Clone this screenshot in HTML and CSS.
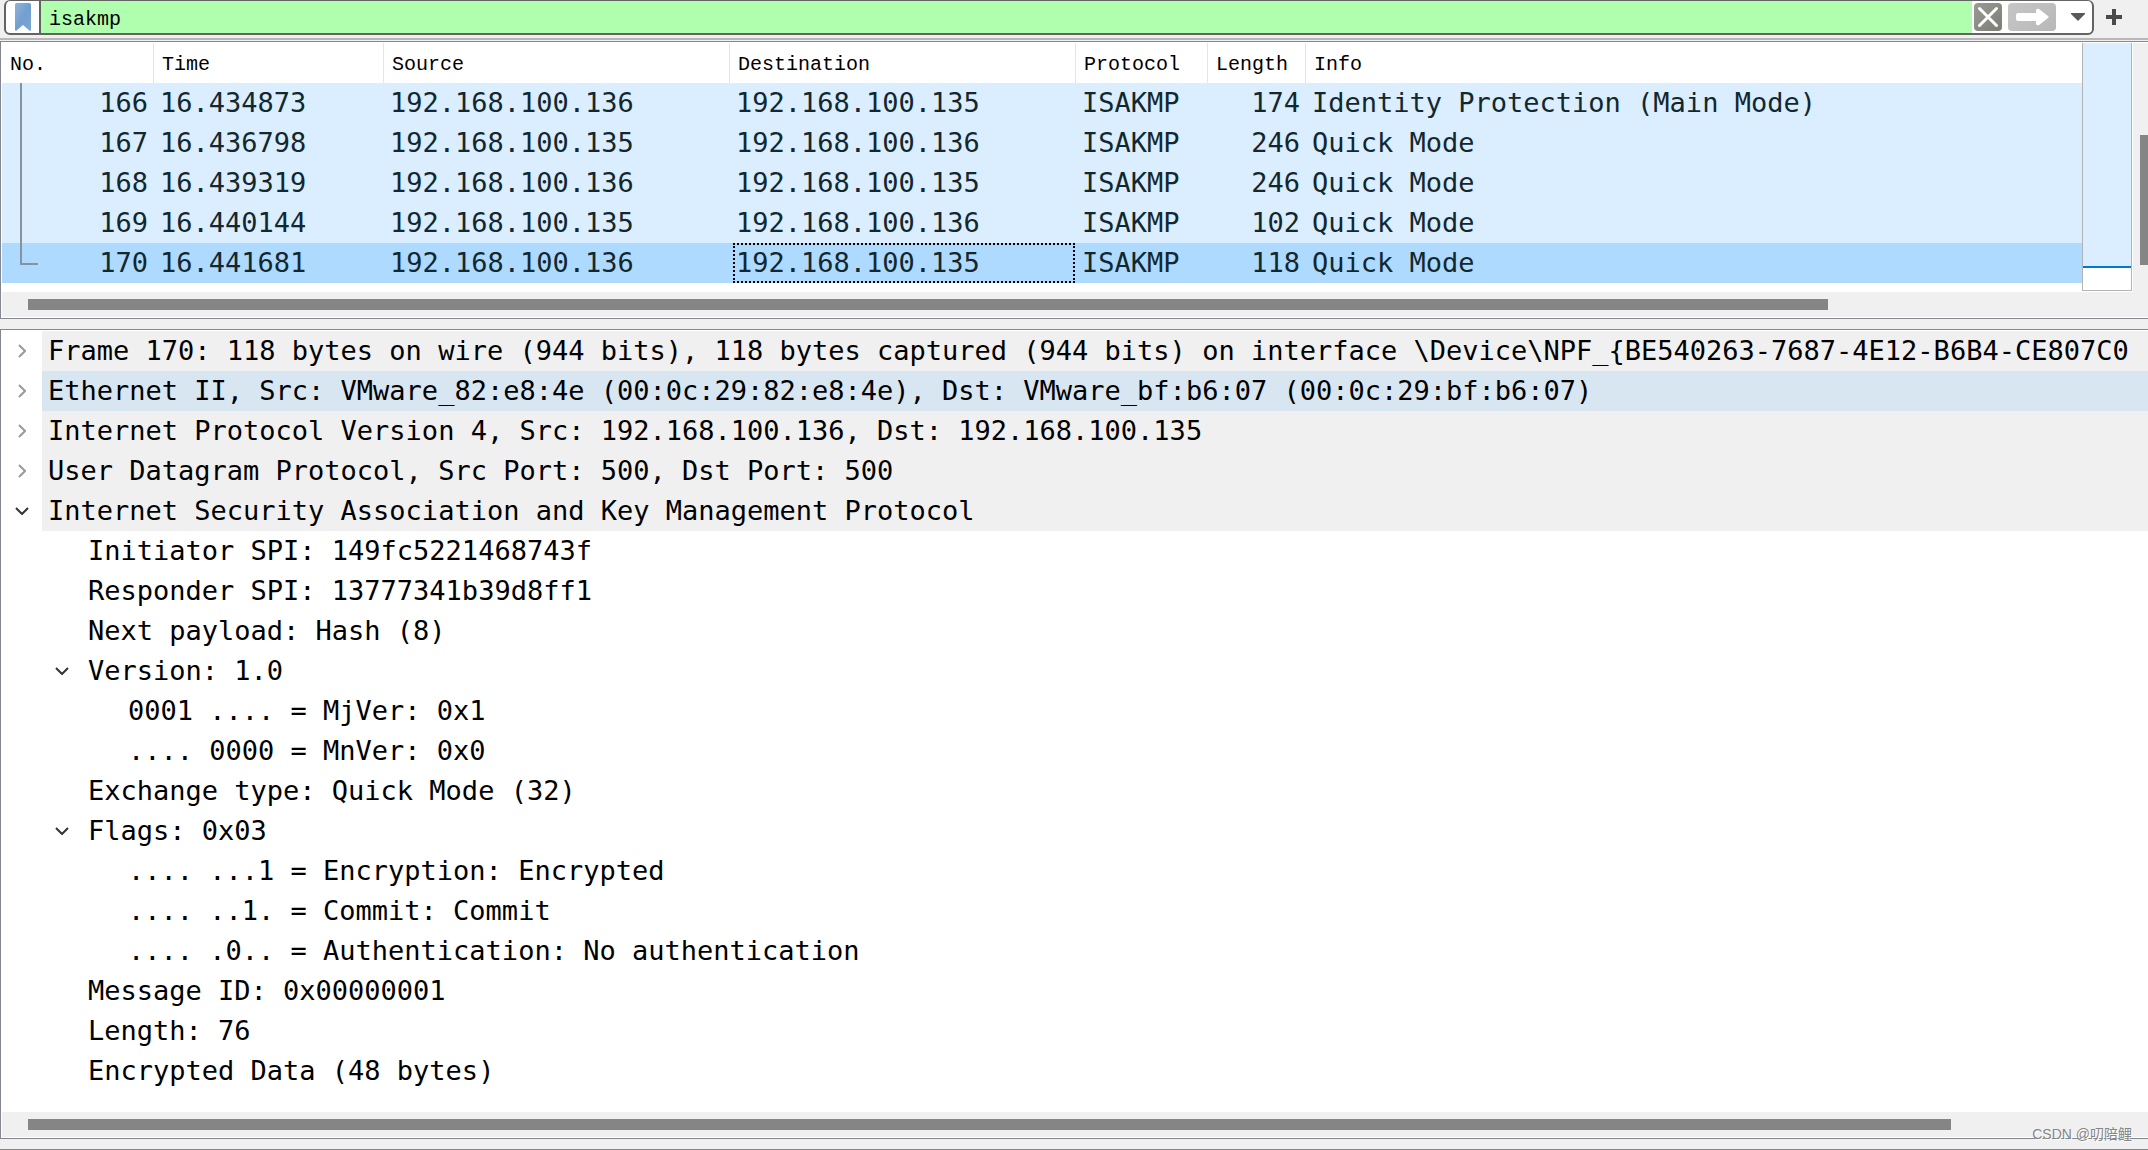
FILE: index.html
```html
<!DOCTYPE html>
<html lang="en">
<head>
<meta charset="utf-8">
<title>isakmp</title>
<link rel="stylesheet" href="styles.css">
</head>
<body>
<form class="toolbar">
  <div class="filter">
    <button type="button" class="bookmark" aria-label="Bookmarks">
      <svg width="16" height="28" viewBox="0 0 16 28"><defs><linearGradient id="bm" x1="0" y1="0" x2="1" y2="1"><stop offset="0" stop-color="#8fb3dc"/><stop offset="0.5" stop-color="#729fcf"/><stop offset="1" stop-color="#7ba6d6"/></linearGradient></defs><path d="M1.500 0h13a1.500 1.500 0 0 1 1.500 1.500V26.500q0 2-1.600 .9L8 22 1.600 27.400Q0 28.500 0 26.500V1.500A1.500 1.500 0 0 1 1.500 0z" fill="url(#bm)"/></svg>
    </button>
    <input class="filter-input" type="text" value="isakmp" aria-label="Display filter" spellcheck="false">
    <button type="button" class="tool clear" aria-label="Clear"><svg width="28" height="28" viewBox="0 0 28 28"><path d="M5.500 5.500l17 17M22.500 5.500l-17 17" stroke="#fff" stroke-width="3" stroke-linecap="round"/></svg></button>
    <button type="button" class="tool apply" aria-label="Apply"><svg width="48" height="28" viewBox="0 0 48 28"><path d="M10 10h18V7q1-2 3-1l9 7q1 1 0 2l-9 7q-2 1-3-1v-3H10q-2 0-2-2v-4q0-2 2-2z" fill="#fff"/></svg></button>
    <button type="button" class="dropdown" aria-label="Recent filters"><svg width="14" height="8" viewBox="0 0 14 8"><path d="M0 0h14v1L7 8 0 1z" fill="#5a5a52"/></svg></button>
  </div>
  <button type="button" class="add" aria-label="Add filter"><svg width="16" height="16" viewBox="0 0 16 16"><path d="M6 0h4v6h6v4h-6v6H6v-6H0V6h6z" fill="#4a4a4a"/></svg></button>
</form>

<section class="panel packets">
  <div class="packet-body">
    <table class="packet-table">
      <colgroup><col class="c-no"><col class="c-time"><col class="c-addr"><col class="c-addr"><col class="c-proto"><col class="c-len"><col></colgroup>
      <thead><tr><th>No.</th><th>Time</th><th>Source</th><th>Destination</th><th>Protocol</th><th>Length</th><th>Info</th></tr></thead>
      <tbody>
        <tr><td class="num stream">166</td><td>16.434873</td><td>192.168.100.136</td><td>192.168.100.135</td><td>ISAKMP</td><td class="num">174</td><td>Identity Protection (Main Mode)</td></tr>
        <tr><td class="num stream">167</td><td>16.436798</td><td>192.168.100.135</td><td>192.168.100.136</td><td>ISAKMP</td><td class="num">246</td><td>Quick Mode</td></tr>
        <tr><td class="num stream">168</td><td>16.439319</td><td>192.168.100.136</td><td>192.168.100.135</td><td>ISAKMP</td><td class="num">246</td><td>Quick Mode</td></tr>
        <tr><td class="num stream">169</td><td>16.440144</td><td>192.168.100.135</td><td>192.168.100.136</td><td>ISAKMP</td><td class="num">102</td><td>Quick Mode</td></tr>
        <tr class="selected"><td class="num stream end">170</td><td>16.441681</td><td>192.168.100.136</td><td class="focused">192.168.100.135</td><td>ISAKMP</td><td class="num">118</td><td>Quick Mode</td></tr>
      </tbody>
    </table>
    <div class="minimap"><div class="minimap-fill"></div></div>
    <div class="vscroll"><div class="vthumb"></div></div>
  </div>
  <div class="hscroll"><div class="hthumb packets-thumb"></div></div>
</section>

<section class="panel details">
  <ul class="tree">
    <li class="proto"><button class="toggle" aria-label="Expand"><svg class="right" width="8" height="14" viewBox="0 0 8 14"><path d="M1 1l6 6-6 6"/></svg></button><span>Frame 170: 118 bytes on wire (944 bits), 118 bytes captured (944 bits) on interface \Device\NPF_{BE540263-7687-4E12-B6B4-CE807C0</span></li>
    <li class="proto hover"><button class="toggle" aria-label="Expand"><svg class="right" width="8" height="14" viewBox="0 0 8 14"><path d="M1 1l6 6-6 6"/></svg></button><span>Ethernet II, Src: VMware_82:e8:4e (00:0c:29:82:e8:4e), Dst: VMware_bf:b6:07 (00:0c:29:bf:b6:07)</span></li>
    <li class="proto"><button class="toggle" aria-label="Expand"><svg class="right" width="8" height="14" viewBox="0 0 8 14"><path d="M1 1l6 6-6 6"/></svg></button><span>Internet Protocol Version 4, Src: 192.168.100.136, Dst: 192.168.100.135</span></li>
    <li class="proto"><button class="toggle" aria-label="Expand"><svg class="right" width="8" height="14" viewBox="0 0 8 14"><path d="M1 1l6 6-6 6"/></svg></button><span>User Datagram Protocol, Src Port: 500, Dst Port: 500</span></li>
    <li class="proto"><button class="toggle" aria-label="Collapse"><svg width="14" height="8" viewBox="0 0 14 8"><path d="M1 1l6 6 6-6"/></svg></button><span>Internet Security Association and Key Management Protocol</span></li>
    <li class="field"><span>Initiator SPI: 149fc5221468743f</span></li>
    <li class="field"><span>Responder SPI: 13777341b39d8ff1</span></li>
    <li class="field"><span>Next payload: Hash (8)</span></li>
    <li class="field"><button class="toggle" aria-label="Collapse"><svg width="14" height="8" viewBox="0 0 14 8"><path d="M1 1l6 6 6-6"/></svg></button><span>Version: 1.0</span></li>
    <li class="bits"><span>0001 .... = MjVer: 0x1</span></li>
    <li class="bits"><span>.... 0000 = MnVer: 0x0</span></li>
    <li class="field"><span>Exchange type: Quick Mode (32)</span></li>
    <li class="field"><button class="toggle" aria-label="Collapse"><svg width="14" height="8" viewBox="0 0 14 8"><path d="M1 1l6 6 6-6"/></svg></button><span>Flags: 0x03</span></li>
    <li class="bits"><span>.... ...1 = Encryption: Encrypted</span></li>
    <li class="bits"><span>.... ..1. = Commit: Commit</span></li>
    <li class="bits"><span>.... .0.. = Authentication: No authentication</span></li>
    <li class="field"><span>Message ID: 0x00000001</span></li>
    <li class="field"><span>Length: 76</span></li>
    <li class="field"><span>Encrypted Data (48 bytes)</span></li>
  </ul>
  <div class="hscroll"><div class="hthumb details-thumb"></div></div>
</section>
<div class="next-panel"></div>
<div class="watermark">CSDN @叨陪鲤</div>
</body>
</html>
```
FILE: styles.css
```css
*, *::before { box-sizing: border-box; }

body {
  margin: 0;
  min-height: 100vh;
  display: flex;
  flex-direction: column;
  position: relative;
  overflow: hidden;
  background: #f0f0f0;
  color: #000;
  font: 27px/40px Consolas, "DejaVu Sans Mono", monospace;
}

button {
  display: flex;
  align-items: center;
  justify-content: center;
  flex: none;
  margin: 0;
  padding: 0;
  border: 0;
  background: none;
}

.toolbar {
  display: flex;
  height: 40px;
  padding-left: 4px;
  border-bottom: 2px solid #b8b8b8;
}

.filter {
  flex: 1;
  display: flex;
  align-items: center;
  height: 35px;
  border: 2px solid #646464;
  border-top-width: 1px;
  border-radius: 6px;
  background: #fff;
  overflow: hidden;
}

.bookmark {
  width: 35px;
  height: 32px;
  border-right: 2px solid #646464;
}

.filter-input {
  flex: 1;
  min-width: 0;
  height: 32px;
  padding: 4px 8px 0;
  border: 0;
  outline: 0;
  background: #afffaf;
  font: 20px/28px NSimSun, "Liberation Mono", monospace;
}

.tool {
  height: 28px;
  border-radius: 4px;
}

.clear {
  width: 28px;
  margin: 0 6px 0 2px;
  background: linear-gradient(135deg, #9a9c94, #7c7e76);
}

.apply {
  width: 48px;
  background: linear-gradient(135deg, #c6c6c6, #b8b8b8);
}

.dropdown {
  width: 36px;
  height: 32px;
  padding-left: 8px;
}

.add {
  width: 54px;
  height: 34px;
  padding-right: 14px;
}

.panel {
  display: flex;
  flex-direction: column;
  border: 1px solid #828790;
  border-right: 0;
  background: #fff;
}

.packets {
  margin: 1px 0 10px;
  padding: 1px 0 1px 1px;
}

.packet-body {
  display: flex;
  height: 249px;
}

.packet-table {
  flex: 1;
  width: 100%;
  height: 240px;
  table-layout: fixed;
  border-collapse: separate;
  border-spacing: 0;
}

.c-no { width: 152px; }
.c-time { width: 230px; }
.c-addr { width: 346px; }
.c-proto { width: 132px; }
.c-len { width: 98px; }

th {
  height: 40px;
  padding: 4px 8px 0;
  border-right: 1px solid #e5e5e5;
  font: 20px/36px NSimSun, "Liberation Mono", monospace;
  text-align: left;
}

th:last-child { border-right: 0; }

td {
  height: 40px;
  padding: 0 6px;
  background: #daeeff;
  color: #12272e;
  line-height: 38px;
  white-space: nowrap;
  overflow: hidden;
}

.num { text-align: right; }

.selected td { background: #aedaff; }

.focused { position: relative; }

.focused::before {
  content: "";
  position: absolute;
  inset: 0 1px 0 3px;
  border: 2px dotted #000;
}

.stream { position: relative; }

.stream::before {
  content: "";
  position: absolute;
  left: 18px;
  top: 0;
  width: 2px;
  height: 40px;
  background: #8494a0;
}

.stream.end::before {
  width: 18px;
  height: 22px;
  background: none;
  border: solid #8494a0;
  border-width: 0 0 2px 2px;
}

.minimap {
  width: 50px;
  height: 248px;
  border: 1px solid #b4b4b4;
  border-top: 0;
}

.minimap-fill {
  height: 225px;
  background: #daeeff;
  border-bottom: 2px solid #0078d7;
}

.vscroll {
  width: 15px;
  margin-left: 1px;
  padding: 92px 0 0 7px;
  background: #f0f0f0;
}

.vthumb {
  height: 130px;
  background: #858585;
}

.hscroll {
  height: 25px;
  padding: 7px 0 7px 26px;
  background: #f0f0f0;
}

.hthumb {
  height: 11px;
  background: #858585;
}

.packets-thumb { width: 84.9%; }
.details-thumb { width: 90.7%; }

.details {
  flex: 1;
  padding: 1px 0 1px 1px;
}

.tree {
  flex: 1;
  margin: 0;
  padding: 0;
  list-style: none;
  overflow: hidden;
}

.tree li {
  display: flex;
  align-items: center;
  justify-content: flex-end;
  height: 40px;
  white-space: nowrap;
}

.tree span {
  flex: 1;
  min-width: 0;
  height: 40px;
  padding-left: 6px;
}

.toggle {
  width: 40px;
  height: 40px;
}

.toggle path {
  fill: none;
  stroke: #333;
  stroke-width: 2;
}

.toggle .right path { stroke: #999; }

.proto span { background: #f0f0f0; }
.proto.hover span { background: #d8e6f2; }

.tree .field { padding-left: 80px; }
.tree .field:has(.toggle) { padding-left: 40px; }
.tree .bits { padding-left: 120px; }

.next-panel {
  height: 1px;
  margin-top: 10px;
  background: #828790;
}

.watermark {
  position: absolute;
  right: 16px;
  bottom: 6px;
  color: #858585;
  font: 14px/20px "Liberation Sans", "Noto Sans CJK SC", sans-serif;
  text-shadow: 1px 1px 0 #fff;
}
```
